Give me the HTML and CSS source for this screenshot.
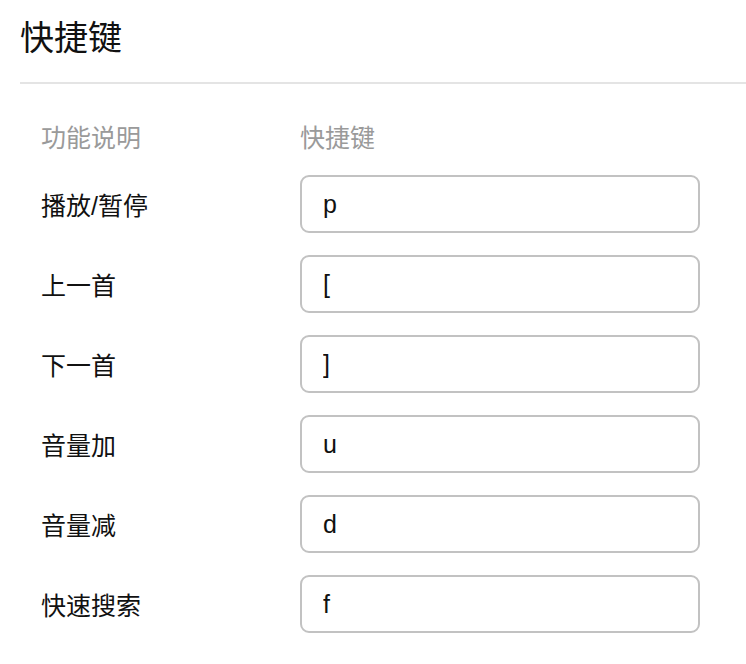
FILE: index.html
```html
<!DOCTYPE html>
<html lang="zh-CN">
<head>
<meta charset="utf-8">
<title>快捷键</title>
<link rel="stylesheet" href="styles.css">
</head>
<body>
<div class="page">
  <h2 class="title">快捷键</h2>
  <div class="shortcuts">
    <div class="head">功能说明</div>
    <div class="head">快捷键</div>

    <div class="label">播放/暂停</div>
    <div class="key"><input class="key-input" type="text" value="p"></div>

    <div class="label">上一首</div>
    <div class="key"><input class="key-input" type="text" value="["></div>

    <div class="label">下一首</div>
    <div class="key"><input class="key-input" type="text" value="]"></div>

    <div class="label">音量加</div>
    <div class="key"><input class="key-input" type="text" value="u"></div>

    <div class="label">音量减</div>
    <div class="key"><input class="key-input" type="text" value="d"></div>

    <div class="label">快速搜索</div>
    <div class="key"><input class="key-input" type="text" value="f"></div>
  </div>
</div>
</body>
</html>
```

FILE: styles.css
```css
* { box-sizing: border-box; }

html, body {
  margin: 0;
  padding: 0;
  background: #ffffff;
}

body {
  font-family: "Liberation Sans", "Noto Sans CJK SC", sans-serif;
  color: #1a1a1a;
}

.page {
  padding: 15px 0 0 20px;
}

.title {
  margin: 0;
  font-family: "Noto Sans CJK SC", sans-serif;
  font-weight: 400;
  font-size: 34px;
  line-height: 42px;
  padding-bottom: 25px;
  border-bottom: 2px solid #e4e4e4;
  color: #111;
}

.shortcuts {
  display: grid;
  grid-template-columns: 259px 400px;
  grid-template-rows: 34px;
  grid-auto-rows: 58px;
  row-gap: 22px;
  padding: 35px 0 0 21px;
}

.head {
  font-family: "Noto Sans CJK SC", sans-serif;
  font-size: 25px;
  line-height: 34px;
  height: 34px;
  color: #9a9a9a;
  align-self: start;
}

.label {
  display: flex;
  align-items: center;
  font-family: "Liberation Sans", "Noto Sans CJK SC", sans-serif;
  font-size: 25px;
  color: #111;
}

.key {
  display: flex;
}

.key-input {
  width: 400px;
  height: 58px;
  border: 2px solid #c2c2c2;
  border-radius: 9px;
  padding: 0 21px;
  font-family: "Liberation Sans", sans-serif;
  font-size: 25px;
  color: #111;
  background: #fff;
  outline: none;
}
```
